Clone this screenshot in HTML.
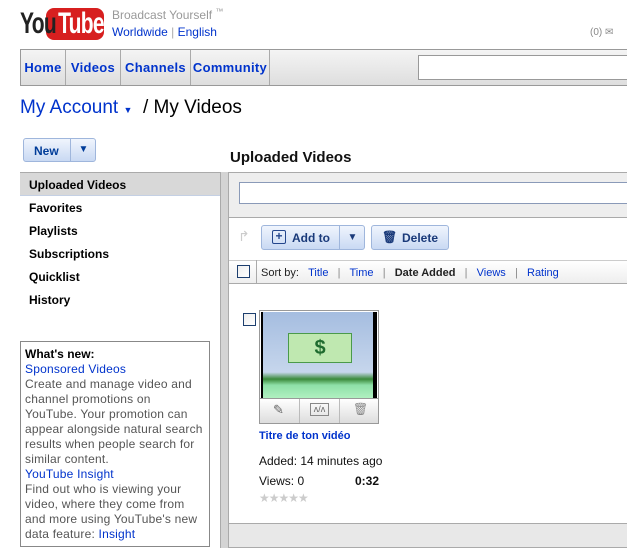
<!DOCTYPE html>
<html><head><style>
*{margin:0;padding:0;box-sizing:border-box}
body{width:627px;height:548px;overflow:hidden;background:#fff;font-family:"Liberation Sans",Arial,sans-serif;position:relative;font-size:12px}
.a{position:absolute}
.blue{color:#0033cc}
.nav{left:20px;top:49px;width:620px;height:37px;border:1px solid #999;background:linear-gradient(#f4f4f4,#dedede)}
.nav span{position:absolute;top:0;height:35px;line-height:35px;font-weight:bold;color:#0033cc;font-size:13px;border-right:1px solid #aaa;text-align:center;letter-spacing:.3px}
.btn{border:1px solid #9fb6dc;border-radius:3px;background:linear-gradient(#f0f5fd,#c9d9f3);color:#003;font-weight:bold;font-size:12px}
.menu div{position:absolute;left:29px;font-weight:bold;font-size:12px;color:#000}
</style></head><body>
<div class="a" style="left:46px;top:8px;width:58px;height:32px;background:#d71f1f;border-radius:8px"></div>
<div class="a" style="left:20px;top:7px;font-weight:bold;font-size:30px;letter-spacing:-1px;color:#222;transform:scaleX(.7);transform-origin:left;white-space:nowrap">You<span style="color:#fff;margin-left:3px">Tube</span></div>
<div class="a" style="left:112px;top:7px;color:#999;font-size:12px">Broadcast Yourself <sup style="font-size:8px">™</sup></div>
<div class="a blue" style="left:112px;top:25px;font-size:12px">Worldwide <span style="color:#aaa">|</span> English</div>
<div class="a" style="left:590px;top:27px;color:#888;font-size:10px">(0) ✉</div>
<div class="a nav">
<span style="left:0;width:45px">Home</span>
<span style="left:45px;width:55px">Videos</span>
<span style="left:100px;width:70px">Channels</span>
<span style="left:170px;width:79px">Community</span>
</div>
<div class="a" style="left:418px;top:55px;width:220px;height:25px;border:1px solid #999;background:#fff"></div>
<div class="a" style="left:20px;top:97px;font-size:19px"><span class="blue">My Account</span> <span class="blue" style="font-size:9px">▼</span> &nbsp;/ My Videos</div>
<div class="a btn" style="left:23px;top:138px;width:73px;height:24px"><span class="a" style="left:10px;top:5px;color:#003c99">New</span><span class="a" style="left:46px;top:0;height:22px;border-left:1px solid #9fb6dc;width:26px;text-align:center;line-height:22px;color:#003c99;font-size:10px">▼</span></div>
<div class="a" style="left:230px;top:149px;font-size:15px;font-weight:bold;color:#111">Uploaded Videos</div>
<div class="a" style="left:20px;top:172px;width:200px;height:24px;background:#d8d8d8;border-top:1px solid #aaa;border-bottom:1px solid #c4d0e4"></div>
<div class="menu">
<div style="top:178px">Uploaded Videos</div><div style="top:201px">Favorites</div><div style="top:224px">Playlists</div><div style="top:247px">Subscriptions</div><div style="top:270px">Quicklist</div><div style="top:293px">History</div>
</div>
<div class="a" style="left:20px;top:341px;width:190px;height:206px;border:1px solid #888;padding:5px 4px;font-size:12px;line-height:15px;color:#555;letter-spacing:.2px">
<b style="color:#000;letter-spacing:0">What's new:</b><br><span class="blue">Sponsored Videos</span><br>Create and manage video and channel promotions on YouTube. Your promotion can appear alongside natural search results when people search for similar content.<br><span class="blue">YouTube Insight</span><br>Find out who is viewing your video, where they come from and more using YouTube's new data feature: <span class="blue">Insight</span></div>
<div class="a" style="left:220px;top:172px;width:9px;height:376px;background:#d4d4d4;border-left:1px solid #aaa;border-right:1px solid #aaa"></div>
<div class="a" style="left:229px;top:172px;width:400px;height:46px;background:#eee;border-top:1px solid #aaa;border-bottom:1px solid #aaa"></div>
<div class="a" style="left:239px;top:182px;width:400px;height:22px;border:1px solid #8a9ab8;background:#fff"></div>
<div class="a" style="left:238px;top:228px;color:#ccc;font-size:14px">↱</div>
<div class="a btn" style="left:261px;top:225px;width:104px;height:25px"><span class="a" style="left:10px;top:4px;width:14px;height:14px;border:1px solid #24468c;border-radius:2px;text-align:center;line-height:11px;color:#24468c">+</span><span class="a" style="left:30px;top:5px;color:#1a3a7a">Add to</span><span class="a" style="left:77px;top:0;height:23px;border-left:1px solid #9fb6dc;width:26px;text-align:center;line-height:23px;color:#1a3a7a;font-size:10px">▼</span></div>
<div class="a btn" style="left:371px;top:225px;width:78px;height:25px"><span class="a" style="left:10px;top:4px;color:#1a3a7a">🗑</span><span class="a" style="left:30px;top:5px;color:#1a3a7a">Delete</span></div>
<div class="a" style="left:229px;top:260px;width:400px;height:24px;background:linear-gradient(#fff,#eee);border-top:1px solid #ccc;border-bottom:1px solid #aaa"></div>
<div class="a" style="left:237px;top:265px;width:13px;height:13px;border:1px solid #1c3e6e;background:linear-gradient(135deg,#eee,#fff)"></div>
<div class="a" style="left:256px;top:260px;height:23px;border-left:1px solid #aaa"></div>
<div class="a" style="left:261px;top:267px;font-size:11px;color:#222">Sort by: &nbsp;&nbsp;<span class="blue">Title</span> &nbsp;&nbsp;<span style="color:#888">|</span>&nbsp;&nbsp; <span class="blue">Time</span> &nbsp;&nbsp;<span style="color:#888">|</span>&nbsp;&nbsp; <b>Date Added</b> &nbsp;&nbsp;<span style="color:#888">|</span>&nbsp;&nbsp; <span class="blue">Views</span> &nbsp;&nbsp;<span style="color:#888">|</span>&nbsp;&nbsp; <span class="blue">Rating</span></div>
<div class="a" style="left:243px;top:313px;width:13px;height:13px;border:1px solid #1c3e6e;background:linear-gradient(135deg,#eee,#fff)"></div>
<div class="a" style="left:259px;top:310px;width:120px;height:114px;border:1px solid #999"></div>
<div class="a" style="left:261px;top:312px;width:116px;height:86px;background:#000"></div>
<div class="a" style="left:263px;top:312px;width:110px;height:86px;background:linear-gradient(#a5bde0,#c6d6ec 70%,#3a8a3a 78%,#8ee0a8 85%,#b0f0c0)"></div>
<div class="a" style="left:288px;top:333px;width:64px;height:30px;background:#bfe8b0;border:1px solid #4a9a4a;text-align:center;color:#1f6b2f;font-weight:bold;font-size:20px;line-height:28px">$</div>
<div class="a" style="left:259px;top:398px;width:120px;height:26px;background:linear-gradient(#fff,#ddd);border:1px solid #999"></div>
<div class="a" style="left:299px;top:399px;height:24px;border-left:1px solid #bbb"></div>
<div class="a" style="left:339px;top:399px;height:24px;border-left:1px solid #bbb"></div>
<div class="a" style="left:273px;top:402px;color:#666;font-size:13px">✎</div>
<div class="a" style="left:310px;top:403px;width:19px;height:13px;border:1px solid #888;font-size:9px;color:#666;line-height:11px;text-align:center">ʌ/ʌ</div>
<div class="a" style="left:353px;top:402px;color:#888;font-size:12px">🗑</div>
<div class="a blue" style="left:259px;top:430px;font-weight:bold;font-size:11px">Titre de ton vidéo</div>
<div class="a" style="left:259px;top:454px;font-size:12px;color:#111">Added: 14 minutes ago</div>
<div class="a" style="left:259px;top:474px;font-size:12px;color:#111">Views: 0</div>
<div class="a" style="left:355px;top:474px;font-size:12px;font-weight:bold;color:#111">0:32</div>
<div class="a" style="left:259px;top:491px;font-size:12px;color:#ccc;letter-spacing:-1px">★★★★★</div>
<div class="a" style="left:229px;top:523px;width:400px;height:25px;background:#e8e8e8;border-top:1px solid #aaa;border-bottom:1px solid #aaa"></div>
</body></html>
